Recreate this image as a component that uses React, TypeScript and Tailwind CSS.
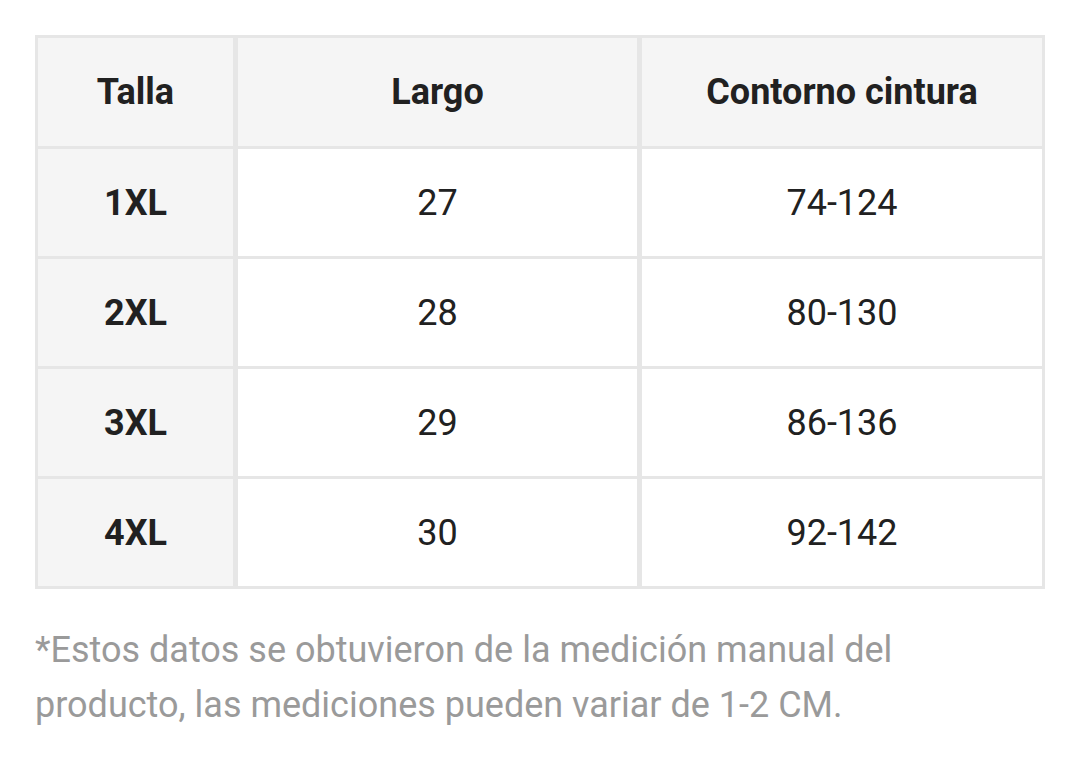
const rows = [
  ["1XL", "27", "74-124"],
  ["2XL", "28", "80-130"],
  ["3XL", "29", "86-136"],
  ["4XL", "30", "92-142"],
];

export default function App() {
  return (
    <div
      className="min-h-screen bg-white px-[35px] pt-[35px] text-[#212121]"
      style={{ fontFamily: "Roboto, 'Liberation Sans', sans-serif" }}
    >
      <div className="grid w-[1010px] grid-cols-[195px_399px_400px] gap-x-[5px] gap-y-[3px] bg-[#e6e6e6] p-[3px]">
        {["Talla", "Largo", "Contorno cintura"].map((h) => (
          <div key={h} className="flex h-[108px] items-center justify-center bg-[#f5f5f5] text-[36px] font-bold">
            {h}
          </div>
        ))}
        {rows.map((r) => (
          <>
            <div key={r[0]} className="flex h-[107px] items-center justify-center bg-[#f5f5f5] text-[36px] font-bold">
              {r[0]}
            </div>
            <div className="flex h-[107px] items-center justify-center bg-white text-[36px]">{r[1]}</div>
            <div className="flex h-[107px] items-center justify-center bg-white text-[36px]">{r[2]}</div>
          </>
        ))}
      </div>
      <p className="mt-[34px] w-[1010px] text-[36px] leading-[55px] text-[#9a9a9a]">
        *Estos datos se obtuvieron de la medición manual del producto, las mediciones pueden variar de 1-2 CM.
      </p>
    </div>
  );
}
